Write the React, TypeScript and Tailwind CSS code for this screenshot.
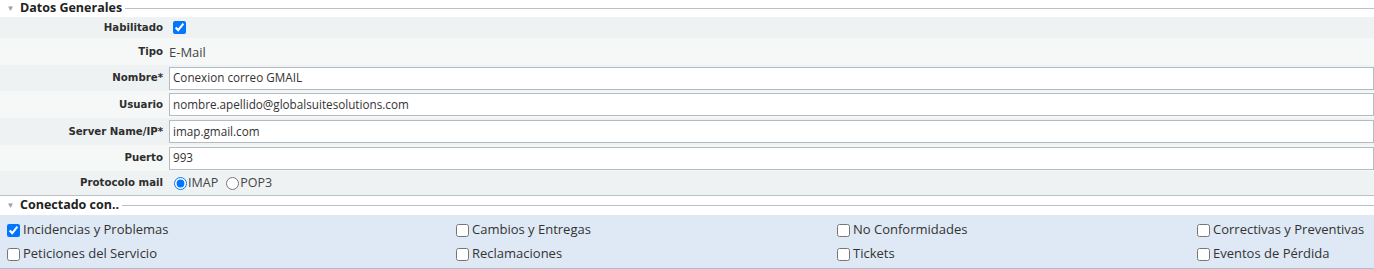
import React from 'react';

const font = { fontFamily: '"Open Sans", "Liberation Sans", sans-serif' };
const labelFont = { fontFamily: '"DejaVu Sans", "Open Sans", sans-serif' };

function SectionHeader({ title }: { title: string }) {
  return (
    <div className="flex items-center h-[14px]">
      <span className="w-[20px] flex justify-center pl-[1px] text-[8px] text-[#9aa3ab] leading-none">▼</span>
      <span className="text-[12.5px] font-bold text-[#222] leading-[14px]">{title}</span>
      <div className="flex-1 ml-[3px] h-px bg-[#b9c1c9]" />
    </div>
  );
}

function Row({ label, shade, h, children }: { label: string; shade: boolean; h: string; children: React.ReactNode }) {
  return (
    <div className={`grid grid-cols-[163px_1fr] items-center gap-[6px] ${h} ${shade ? 'bg-[#eef2f3]' : 'bg-[#f6f8f8]'}`}>
      <div className="text-right text-[10.2px] font-bold text-[#2e2e2e]" style={labelFont}>{label}</div>
      <div className="flex items-center">{children}</div>
    </div>
  );
}

function TextBox({ value }: { value: string }) {
  return (
    <div className="w-full h-[23px] flex items-center bg-white border border-[#b3bbc3] pl-[3px] text-[11.7px] text-[#333]">
      {value}
    </div>
  );
}

const links = [
  ['Incidencias y Problemas', true],
  ['Cambios y Entregas', false],
  ['No Conformidades', false],
  ['Correctivas y Preventivas', false],
  ['Peticiones del Servicio', false],
  ['Reclamaciones', false],
  ['Tickets', false],
  ['Eventos de Pérdida', false],
] as const;

export default function App() {
  return (
    <div className="w-[1374px] h-[269px] bg-white overflow-hidden pt-[1px]" style={font}>
      <SectionHeader title="Datos Generales" />
      <div className="mt-[2px]">
        <Row label="Habilitado" shade h="h-[21px]">
          <input type="checkbox" defaultChecked className="w-[13px] h-[13px] ml-[4px]" />
        </Row>
        <Row label="Tipo" shade={false} h="h-[27px]">
          <span className="text-[13px] text-[#444] pt-[2px]">E-Mail</span>
        </Row>
        <Row label="Nombre*" shade h="h-[26px]">
          <TextBox value="Conexion correo GMAIL" />
        </Row>
        <Row label="Usuario" shade={false} h="h-[27px]">
          <TextBox value="nombre.apellido@globalsuitesolutions.com" />
        </Row>
        <Row label="Server Name/IP*" shade h="h-[27px]">
          <TextBox value="imap.gmail.com" />
        </Row>
        <Row label="Puerto" shade={false} h="h-[26px]">
          <TextBox value="993" />
        </Row>
        <Row label="Protocolo mail" shade h="h-[24px]">
          <label className="flex items-center text-[12.5px] text-[#444]">
            <input type="radio" name="proto" defaultChecked className="w-[13px] h-[13px] ml-[5px] mr-[1px]" />
            IMAP
          </label>
          <label className="flex items-center text-[12.5px] text-[#444] ml-[8px]">
            <input type="radio" name="proto" className="w-[13px] h-[13px] mr-[1px]" />
            POP3
          </label>
        </Row>
      </div>
      <div className="border-t border-[#b9c1c9] pt-[2px]">
        <SectionHeader title="Conectado con.." />
      </div>
      <div className="mt-[3px] bg-[#dfe9f5] border-b-2 border-[#aebdcc] pl-[3px] pt-[3px] pb-[2px] grid grid-cols-[449px_381px_360px_1fr]">
        {links.map(([name, checked]) => (
          <label key={name} className="flex items-center h-[24px] text-[13px] text-[#333]">
            <input type="checkbox" defaultChecked={checked} className="w-[13px] h-[13px] ml-[4px] mr-[3px]" />
            {name}
          </label>
        ))}
      </div>
    </div>
  );
}
